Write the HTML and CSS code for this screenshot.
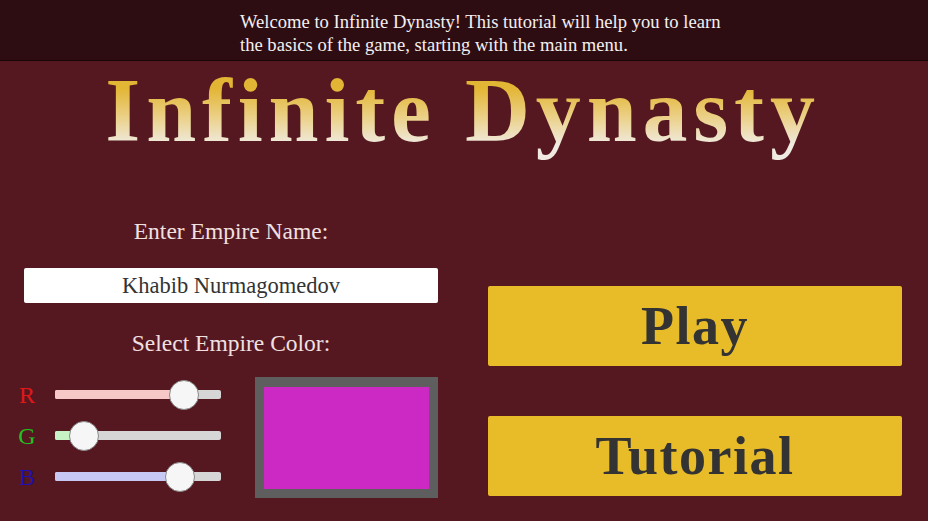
FILE: index.html
```html
<!DOCTYPE html>
<html>
<head>
<meta charset="utf-8">
<link rel="stylesheet" href="styles.css">
</head>
<body>
<div class="banner">
  <p class="banner-text">Welcome to Infinite Dynasty! This tutorial will help you to learn<br>the basics of the game, starting with the main menu.</p>
</div>
<div class="main">
  <div class="title-wrap"><h1 class="title">Infinite Dynasty</h1></div>
  <div class="columns">
    <div class="left">
      <div class="label">Enter Empire Name:</div>
      <div class="name-input">Khabib Nurmagomedov</div>
      <div class="label label-color">Select Empire Color:</div>
      <div class="color-row">
        <div class="sliders">
          <div class="slider-row">
            <span class="ch ch-r">R</span>
            <div class="track"><div class="fill fill-r" style="width:78%"></div><div class="thumb" style="left:78%"></div></div>
          </div>
          <div class="slider-row">
            <span class="ch ch-g">G</span>
            <div class="track"><div class="fill fill-g" style="width:17.5%"></div><div class="thumb" style="left:17.5%"></div></div>
          </div>
          <div class="slider-row">
            <span class="ch ch-b">B</span>
            <div class="track"><div class="fill fill-b" style="width:75%"></div><div class="thumb" style="left:75%"></div></div>
          </div>
        </div>
        <div class="preview"><div class="swatch" style="background:#cc28c4"></div></div>
      </div>
    </div>
    <div class="right">
      <button class="btn btn-play">Play</button>
      <button class="btn btn-tutorial">Tutorial</button>
    </div>
  </div>
</div>
</body>
</html>
```
FILE: styles.css
```css
html, body {
  margin: 0;
  padding: 0;
  height: 100%;
  overflow: hidden;
}
body {
  background: #551820;
  font-family: "Liberation Serif", serif;
}
.banner {
  height: 61px;
  background: #2d0d12;
  border-bottom: 1px solid #1a0508;
  box-sizing: border-box;
  padding: 10px 0 0 240px;
}
.banner-text {
  margin: 0;
  color: #f4f0f0;
  font-size: 18.6px;
  line-height: 23px;
}
.main {
  padding: 0 26px 0 24px;
}
.title-wrap {
  height: 154px;
  padding-top: 8px;
  box-sizing: border-box;
  text-align: center;
}
.title {
  display: inline-block;
  margin: 0;
  padding-bottom: 22px;
  font-family: "Liberation Serif", serif;
  font-weight: bold;
  font-size: 90px;
  line-height: 84px;
  letter-spacing: 5.8px;
  background: linear-gradient(to bottom, #e3b534 18%, #ebd086 45%, #f0ebe2 72%);
  -webkit-background-clip: text;
  background-clip: text;
  color: transparent;
}
.columns {
  display: grid;
  grid-template-columns: 414px 414px;
  column-gap: 50px;
}
.left {
  display: flex;
  flex-direction: column;
}
.label {
  text-align: center;
  color: #f2e0e0;
  font-size: 23.5px;
  line-height: 32px;
}
.name-input {
  margin-top: 21px;
  height: 35px;
  background: #ffffff;
  border-radius: 2px;
  color: #333333;
  font-size: 22.5px;
  line-height: 35px;
  text-align: center;
}
.label-color {
  margin-top: 24px;
}
.color-row {
  margin-top: 18px;
  display: flex;
  align-items: flex-start;
}
.sliders {
  display: flex;
  flex-direction: column;
  margin-left: -15px;
  margin-top: -3px;
}
.slider-row {
  height: 41px;
  display: flex;
  align-items: center;
}
.ch {
  width: 36px;
  margin-right: 10px;
  font-size: 24px;
  line-height: 24px;
  text-align: center;
}
.ch-r { color: #e01818; }
.ch-g { color: #22c022; }
.ch-b { color: #2010b0; }
.track {
  position: relative;
  width: 166px;
  height: 9px;
  border-radius: 2px;
  background: #d6d6d6;
}
.fill {
  height: 100%;
  border-radius: 2px 0 0 2px;
}
.fill-r { background: #f6c8c8; }
.fill-g { background: #c6f2c6; }
.fill-b { background: #c8c8f4; }
.thumb {
  position: absolute;
  top: 50%;
  width: 28px;
  height: 28px;
  margin: -15px 0 0 -15px;
  border-radius: 50%;
  background: #f6f6f6;
  border: 1px solid #888888;
}
.preview {
  margin-left: 34px;
  width: 183px;
  height: 121px;
  box-sizing: border-box;
  padding: 10px 9px 9px 9px;
  background: #5e5e5e;
}
.swatch {
  width: 100%;
  height: 100%;
}
.right {
  display: flex;
  flex-direction: column;
  padding-top: 71px;
  row-gap: 50px;
}
.btn {
  height: 80px;
  border: none;
  border-radius: 2px;
  background: #e8bc28;
  color: #333333;
  font-family: "Liberation Serif", serif;
  font-weight: bold;
  font-size: 54px;
  letter-spacing: 1.5px;
  padding: 0;
  cursor: pointer;
}
```
